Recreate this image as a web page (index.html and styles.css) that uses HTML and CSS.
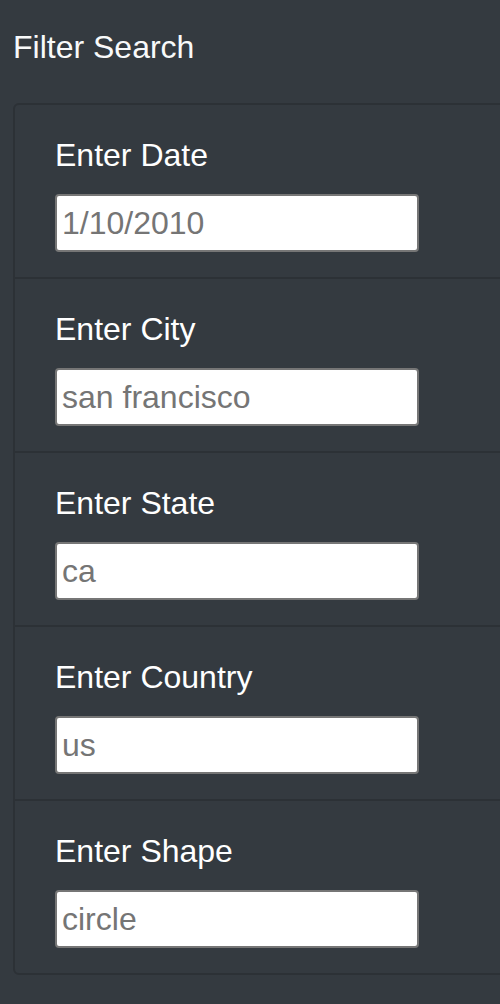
FILE: index.html
```html
<!DOCTYPE html>
<html>
<head>
<meta charset="utf-8">
<link rel="stylesheet" href="styles.css">
</head>
<body>
<div class="page">
  <h1 class="title">Filter Search</h1>
  <ul class="filters">
    <li class="filter">
      <label class="filter-label" for="date">Enter Date</label>
      <input class="filter-input" id="date" type="text" placeholder="1/10/2010">
    </li>
    <li class="filter">
      <label class="filter-label" for="city">Enter City</label>
      <input class="filter-input" id="city" type="text" placeholder="san francisco">
    </li>
    <li class="filter">
      <label class="filter-label" for="state">Enter State</label>
      <input class="filter-input" id="state" type="text" placeholder="ca">
    </li>
    <li class="filter">
      <label class="filter-label" for="country">Enter Country</label>
      <input class="filter-input" id="country" type="text" placeholder="us">
    </li>
    <li class="filter">
      <label class="filter-label" for="shape">Enter Shape</label>
      <input class="filter-input" id="shape" type="text" placeholder="circle">
    </li>
  </ul>
</div>
</body>
</html>
```
FILE: styles.css
```css
html, body {
  margin: 0;
  padding: 0;
  background: #343a40;
}
body {
  font-family: "Liberation Sans", Arial, sans-serif;
  color: #fff;
}
.page {
  box-sizing: border-box;
  width: 500px;
  padding: 23px 0 0 13px;
  overflow: hidden;
}
.title {
  margin: 0 0 32px 0;
  font-size: 32px;
  line-height: 48px;
  font-weight: 400;
  color: #f8f9fa;
}
.filters {
  list-style: none;
  margin: 0 -60px 0 0;
  padding: 0;
  border: 2px solid #2c3136;
  border-radius: 6px;
}
.filter {
  display: flex;
  flex-direction: column;
  align-items: flex-start;
  padding: 26px 40px 25px 40px;
}
.filter + .filter {
  border-top: 2px solid #2c3136;
}
.filter-label {
  font-size: 32px;
  line-height: 48px;
  margin-bottom: 15px;
  color: #fff;
}
.filter-input {
  box-sizing: border-box;
  width: 364px;
  height: 58px;
  margin: 0;
  border: 2px solid #767676;
  border-radius: 4px;
  background: #fff;
  padding: 0 5px;
  font-family: "Liberation Sans", Arial, sans-serif;
  font-size: 32px;
  color: #333;
  outline: none;
}
.filter-input::placeholder {
  color: #757575;
  opacity: 1;
}
```
